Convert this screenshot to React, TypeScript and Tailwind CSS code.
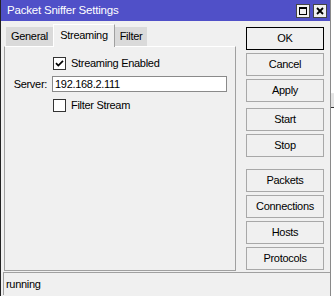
import React from "react";

const font = { fontFamily: '"Liberation Sans", Arial, sans-serif' };

function Btn({ label, def }: { label: string; def?: boolean }) {
  return (
    <div
      className={
        "h-[23px] w-[78px] flex items-center justify-center bg-[#f0f0f0] text-[11px] tracking-[-0.3px] text-black border " +
        (def ? "border-black" : "border-[#a8a8a8]")
      }
    >
      {label}
    </div>
  );
}

function Check({ checked }: { checked?: boolean }) {
  return (
    <div className="w-[13px] h-[13px] bg-white border border-[#333] flex items-center justify-center">
      {checked && (
        <svg width="9" height="9" viewBox="0 0 9 9">
          <path d="M1 4.2 L3.3 6.6 L8 1.8" stroke="#000" strokeWidth="1.7" fill="none" />
        </svg>
      )}
    </div>
  );
}

export default function App() {
  return (
    <div className="w-[334px] h-[296px] flex bg-white overflow-hidden" style={font}>
      <div className="w-[331px] h-[296px] flex flex-col bg-[#f0f0f0] border-l border-l-[#222] border-r border-r-[#8a8a8a]">
        {/* title bar */}
        <div className="h-[21px] shrink-0 bg-[#5050c8] flex items-center justify-between pl-[6px] pr-[3px]">
          <span className="text-white text-[11.5px] tracking-[-0.2px]">Packet Sniffer Settings</span>
          <div className="flex gap-[3px]">
            <div className="w-[14px] h-[14px] bg-[#f0f0f0] border border-[#444] flex items-center justify-center">
              <div className="w-[8px] h-[8px] border border-black border-t-2" />
            </div>
            <div className="w-[14px] h-[14px] bg-[#f0f0f0] border border-[#444] flex items-center justify-center">
              <svg width="8" height="8" viewBox="0 0 8 8">
                <path d="M1 1 L7 7 M7 1 L1 7" stroke="#000" strokeWidth="1.8" />
              </svg>
            </div>
          </div>
        </div>
        {/* body */}
        <div className="flex flex-1">
          <div className="ml-[3px] w-[232px] flex flex-col">
            {/* tabs */}
            <div className="flex items-end h-[25px] pl-[2px] text-[11px] tracking-[-0.3px] text-black">
              <div className="h-[19px] w-[47px] bg-[#dadada] flex items-center justify-center">General</div>
              <div className="h-[23px] w-[62px] bg-[#f0f0f0] border-l border-t border-white border-r border-r-[#a0a0a0] flex items-center justify-center relative z-10 -mb-px pb-[2px]">
                Streaming
              </div>
              <div className="h-[19px] w-[32px] bg-[#dadada] flex items-center justify-center">Filter</div>
            </div>
            {/* panel */}
            <div className="h-[225px] border-t border-t-white border-l border-l-[#a0a0a0] border-r border-r-[#a0a0a0] border-b border-b-[#a0a0a0] flex flex-col text-[11px] tracking-[-0.3px] text-black">
              <div className="flex items-center h-[13px] mt-[10px] ml-[48px] gap-[5px]">
                <Check checked />
                <span>Streaming Enabled</span>
              </div>
              <div className="flex items-center mt-[6px] h-[16px]">
                <span className="w-[42px] text-right">Server:</span>
                <div className="ml-[5px] w-[175px] h-[16px] bg-white border border-[#8a8a8a] flex items-center pl-[2px]">
                  192.168.2.111
                </div>
              </div>
              <div className="flex items-center h-[13px] mt-[7px] ml-[48px] gap-[5px]">
                <Check />
                <span>Filter Stream</span>
              </div>
            </div>
          </div>
          {/* buttons */}
          <div className="ml-[10px] pt-[6px] flex flex-col">
            <div className="flex flex-col gap-[3px]">
              <Btn label="OK" def />
              <Btn label="Cancel" />
              <Btn label="Apply" />
            </div>
            <div className="flex flex-col gap-[3px] mt-[6px]">
              <Btn label="Start" />
              <Btn label="Stop" />
            </div>
            <div className="flex flex-col gap-[3px] mt-[12px]">
              <Btn label="Packets" />
              <Btn label="Connections" />
              <Btn label="Hosts" />
              <Btn label="Protocols" />
            </div>
          </div>
        </div>
        {/* status bar */}
        <div className="h-[23px] mt-[1px] mb-[1px] ml-[2px] shrink-0 border-t border-l border-[#a0a0a0] flex items-center pl-[2px] text-[11px] tracking-[-0.3px] text-black">
          running
        </div>
      </div>
      {/* background strip */}
      <div className="flex-1 flex flex-col">
        <div className="h-[94px] border-b border-[#e8e8e8]" />
        <div className="h-[14px] bg-[#e4e4e4] border-b border-[#333]" />
        <div className="flex-1 bg-white" />
      </div>
    </div>
  );
}
